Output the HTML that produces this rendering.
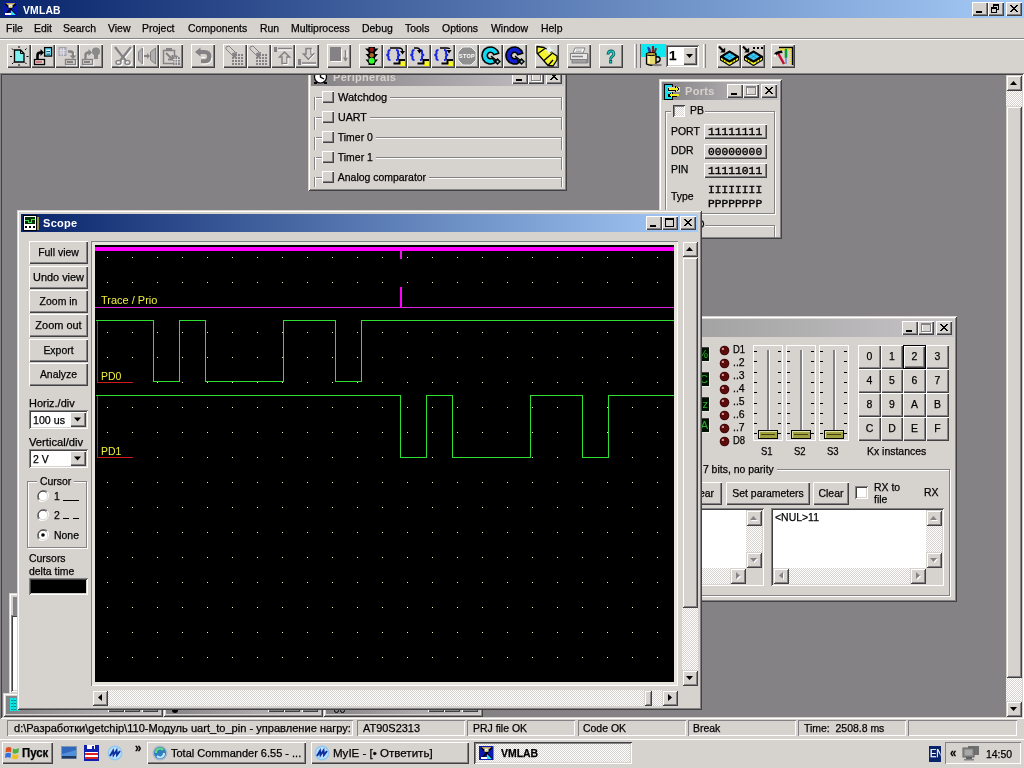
<!DOCTYPE html>
<html><head><meta charset="utf-8"><title>VMLAB</title><style>
*{box-sizing:border-box;margin:0;padding:0}
html,body{width:1024px;height:768px;overflow:hidden;background:#d6d3ce}
body{font-family:"Liberation Sans",sans-serif;font-size:11px;color:#000;position:relative}
#root{position:absolute;left:0;top:0;width:1024px;height:768px;will-change:transform}
.a{position:absolute}
.t{position:absolute;white-space:nowrap;-webkit-text-stroke:0.250px;line-height:13px;height:13px;transform-origin:0 0;transform:scaleX(.95)}
.tc{transform-origin:50% 0}
.win{position:absolute;background:#d6d3ce;box-shadow:inset 1px 1px 0 #d6d3ce,inset -1px -1px 0 #424142,inset 2px 2px 0 #fff,inset -2px -2px 0 #848284}
.btn{position:absolute;background:#d6d3ce;box-shadow:inset 1px 1px 0 #fff,inset -1px -1px 0 #424142,inset -2px -2px 0 #848284;text-align:center}
.tb{position:absolute;background:#d6d3ce;box-shadow:inset 1px 1px 0 #fff,inset -1px -1px 0 #424142,inset -2px -2px 0 #848284}
.sb{position:absolute;background:#d6d3ce;box-shadow:inset 1px 1px 0 #d6d3ce,inset -1px -1px 0 #424142,inset 2px 2px 0 #fff,inset -2px -2px 0 #848284}
.sunk{position:absolute;box-shadow:inset 1px 1px 0 #848284,inset -1px -1px 0 #fff,inset 2px 2px 0 #424142,inset -2px -2px 0 #d6d3ce}
.thin{position:absolute;box-shadow:inset 1px 1px 0 #848284,inset -1px -1px 0 #fff}
.trk{position:absolute;background:repeating-conic-gradient(#fff 0% 25%,#d6d3ce 0% 50%) 0 0/2px 2px}
.grp{position:absolute;border:1px solid #848284;box-shadow:1px 1px 0 #fff,inset 1px 1px 0 #fff}
.tact{position:absolute;background:linear-gradient(90deg,#08246b,#a5cbf7)}
.tina{position:absolute;background:linear-gradient(90deg,#848284,#c6c3c6)}
.cap{position:absolute;color:#fff;font-weight:bold;font-size:11px;line-height:13px;white-space:nowrap}
svg{position:absolute;overflow:visible}
</style></head><body><div id="root">
<div class="tact" style="left:0px;top:0px;width:1024px;height:18px;"></div>
<svg class="a" style="left:2px;top:1px" width="16" height="16"><rect x="1" y="1" width="14.500" height="14" fill="#0818b0"/>
<path d="M2.500 2.200 H14.500 L13 3.800 H4 Z" fill="#f0d040"/>
<path d="M3 2.500 L14 14 M14 2.500 L3 14" stroke="#000" stroke-width="1.700"/>
<rect x="6.500" y="3.500" width="4" height="3.200" fill="#f4f4e0"/><path d="M7 7 L9.500 5" stroke="#e0c030" stroke-width="1"/>
<path d="M9 9 L14 14 H9 Z" fill="#30e0f0"/><rect x="3" y="12" width="6" height="2" fill="#fff"/></svg>
<div class="cap" style="left:23px;top:4px;letter-spacing:0.2px;transform-origin:0 0;transform:scaleX(.94)">VMLAB</div>
<div class="tb" style="left:972px;top:2px;width:16px;height:14px;"></div>
<svg class="a" style="left:972px;top:2px" width="16" height="14" shape-rendering="crispEdges"><rect x="4" y="9" width="6" height="2" fill="#000"/></svg>
<div class="tb" style="left:988px;top:2px;width:16px;height:14px;"></div>
<svg class="a" style="left:988px;top:2px" width="16" height="14" shape-rendering="crispEdges"><rect x="5.5" y="2.5" width="5" height="5" fill="none" stroke="#000"/><rect x="5" y="2" width="6" height="2" fill="#000"/><rect x="3.5" y="5.5" width="5" height="5" fill="#d6d3ce" stroke="#000"/><rect x="3" y="5" width="6" height="2" fill="#000"/></svg>
<div class="tb" style="left:1006px;top:2px;width:16px;height:14px;"></div>
<svg class="a" style="left:1006px;top:2px" width="16" height="14" shape-rendering="crispEdges"><path d="M4 3 L11 10 M5 3 L12 10 M11 3 L4 10 M12 3 L5 10" stroke="#000" stroke-width="1" shape-rendering="auto"/></svg>
<div class="t" style="left:6px;top:22px;">File</div>
<div class="t" style="left:34px;top:22px;">Edit</div>
<div class="t" style="left:63px;top:22px;">Search</div>
<div class="t" style="left:108px;top:22px;">View</div>
<div class="t" style="left:142px;top:22px;">Project</div>
<div class="t" style="left:188px;top:22px;">Components</div>
<div class="t" style="left:260px;top:22px;">Run</div>
<div class="t" style="left:291px;top:22px;">Multiprocess</div>
<div class="t" style="left:362px;top:22px;">Debug</div>
<div class="t" style="left:405px;top:22px;">Tools</div>
<div class="t" style="left:442px;top:22px;">Options</div>
<div class="t" style="left:491px;top:22px;">Window</div>
<div class="t" style="left:541px;top:22px;">Help</div>
<div class="a" style="left:0px;top:38px;width:1024px;height:1px;background:#848284"></div>
<div class="a" style="left:0px;top:39px;width:1024px;height:1px;background:#fff"></div>
<div class="tb" style="left:7px;top:44px;width:24px;height:24px;"></div>
<div class="tb" style="left:31px;top:44px;width:24px;height:24px;"></div>
<div class="tb" style="left:55px;top:44px;width:24px;height:24px;"></div>
<div class="tb" style="left:79px;top:44px;width:24px;height:24px;"></div>
<div class="tb" style="left:111px;top:44px;width:24px;height:24px;"></div>
<div class="tb" style="left:135px;top:44px;width:24px;height:24px;"></div>
<div class="tb" style="left:159px;top:44px;width:24px;height:24px;"></div>
<div class="tb" style="left:191px;top:44px;width:24px;height:24px;"></div>
<div class="tb" style="left:223px;top:44px;width:24px;height:24px;"></div>
<div class="tb" style="left:247px;top:44px;width:24px;height:24px;"></div>
<div class="tb" style="left:271px;top:44px;width:24px;height:24px;"></div>
<div class="tb" style="left:295px;top:44px;width:24px;height:24px;"></div>
<div class="tb" style="left:327px;top:44px;width:24px;height:24px;"></div>
<div class="tb" style="left:359px;top:44px;width:24px;height:24px;"></div>
<div class="tb" style="left:383px;top:44px;width:24px;height:24px;"></div>
<div class="tb" style="left:407px;top:44px;width:24px;height:24px;"></div>
<div class="tb" style="left:431px;top:44px;width:24px;height:24px;"></div>
<div class="tb" style="left:455px;top:44px;width:24px;height:24px;"></div>
<div class="tb" style="left:479px;top:44px;width:24px;height:24px;"></div>
<div class="tb" style="left:503px;top:44px;width:24px;height:24px;"></div>
<div class="tb" style="left:535px;top:44px;width:24px;height:24px;"></div>
<div class="tb" style="left:567px;top:44px;width:24px;height:24px;"></div>
<div class="tb" style="left:599px;top:44px;width:24px;height:24px;"></div>
<div class="a" style="left:634px;top:44px;width:1px;height:24px;background:#fff"></div>
<div class="a" style="left:636px;top:44px;width:1px;height:24px;background:#848284"></div>
<div class="a" style="left:703px;top:44px;width:1px;height:24px;background:#fff"></div>
<div class="a" style="left:705px;top:44px;width:1px;height:24px;background:#848284"></div>
<div class="a" style="left:640px;top:44px;width:26px;height:24px;background:linear-gradient(#10e8f0 0 13px,#d6d3ce 13px);box-shadow:inset 1px 0 0 #606060"></div>
<div class="a" style="left:666px;top:45px;width:33px;height:22px;background:#fff;box-shadow:inset 1px 1px 0 #848284,inset -1px -1px 0 #fff,inset 2px 2px 0 #424142,inset -2px -2px 0 #d6d3ce"></div>
<div class="t" style="left:669px;top:48px;font-size:13.500px;font-weight:bold;line-height:15px;height:15px;transform:none">1</div>
<div class="a" style="left:683px;top:47px;width:14px;height:18px;background:#d6d3ce;box-shadow:inset 1px 1px 0 #fff,inset -1px -1px 0 #424142,inset -2px -2px 0 #848284"></div>
<svg class="a" style="left:683px;top:47px" width="14" height="18"><polygon points="3.0,7 10.0,7 6.5,11" fill="#000"/></svg>
<div class="tb" style="left:717px;top:44px;width:24px;height:24px;"></div>
<div class="tb" style="left:741px;top:44px;width:24px;height:24px;"></div>
<div class="tb" style="left:771px;top:44px;width:24px;height:24px;"></div>
<div class="a" style="left:0px;top:73px;width:1024px;height:646px;background:#848284;box-shadow:inset 1px 1px 0 #848284,inset -1px -1px 0 #fff,inset 2px 2px 0 #424142,inset -2px -2px 0 #d6d3ce"></div>
<svg class="a" style="left:7px;top:44px" width="24" height="24"><path d="M7.500 6 H13.500 L17 9.500 V18 H7.500 Z" fill="#7ff0f0" stroke="#000" stroke-width="1.300"/>
<path d="M13.500 6 V9.500 H17" fill="none" stroke="#000"/>
<g stroke="#000" stroke-width="1"><path d="M12 2v2 M12 20v2 M3 12.500h2 M19.500 12.500h2 M5 4.500l1.500 1.500 M19.500 4.500l-1.500 1.500 M5 20l1.500-1.500 M19.500 20l-1.500-1.500"/></g></svg>
<svg class="a" style="left:31px;top:44px" width="24" height="24"><rect x="3.500" y="15.500" width="10" height="5" fill="#e8d8d8" stroke="#000" stroke-width="1.300"/><rect x="5" y="17.200" width="6" height="1.600" fill="#d06060"/>
<path d="M6.500 15 V11.500 Q6.500 8.500 9.500 8.500 H10.500" fill="none" stroke="#000" stroke-width="2.600"/><path d="M9.500 5 L13 8.500 L9.500 12 Z" fill="#000"/>
<rect x="13.600" y="3.600" width="7" height="8.500" fill="#60e0ff" stroke="#000" stroke-width="1.300"/><path d="M15.500 6.500h3.500 M15.500 9h3.500" stroke="#fff" stroke-width="1.100"/><path d="M15.500 7.600h3.500 M15.500 10.100h3.500" stroke="#000" stroke-width="0.700"/></svg>
<svg class="a" style="left:55px;top:44px" width="24" height="24"><g transform="translate(1,1)"><rect x="10.500" y="15.5" width="10" height="5" fill="none" stroke="#fff" stroke-width="1.4"/></g>
<rect x="4" y="3.500" width="7" height="8" fill="#b8b8c8" stroke="#a0a0a8"/><path d="M6 4v8 M8.5 4v8 M4 6.500h7 M4 9h7" stroke="#e8e0e8" stroke-width="0.8"/>
<path d="M13 7.500 H15.500 Q18 7.500 18 10 V12" fill="none" stroke="#848284" stroke-width="2.300"/><path d="M14.500 11.500 H21.500 L18 15 Z" fill="#848284"/><path d="M19.500 9 V11" stroke="#fff" stroke-width="0.800"/>
<rect x="10.500" y="15.5" width="10" height="5" fill="#d6d3ce" stroke="#848284" stroke-width="1.4"/><rect x="12" y="17" width="6" height="2" fill="#848284"/></svg>
<svg class="a" style="left:79px;top:44px" width="24" height="24"><g transform="translate(1,1)"><rect x="3.500" y="15.5" width="10" height="5" fill="none" stroke="#fff" stroke-width="1.4"/></g>
<rect x="3.500" y="15.5" width="10" height="5" fill="#d6d3ce" stroke="#848284" stroke-width="1.4"/><rect x="5" y="17" width="6" height="2" fill="#848284"/>
<path d="M6.500 15 V11.500 Q6.500 8.500 9.500 8.500 H10.500" fill="none" stroke="#848284" stroke-width="2.300"/><path d="M9.500 5 L13 8.500 L9.500 12 Z" fill="#848284"/>
<circle cx="17" cy="7.500" r="4" fill="#8a8a8a"/><rect x="15" y="10.500" width="4" height="4.500" fill="#8a8a8a"/></svg>
<svg class="a" style="left:111px;top:44px" width="24" height="24"><g transform="translate(1,1)" fill="#fff" stroke="#fff"><path d="M4 3 L15 17 M20 3 L9 17" fill="none" stroke-width="2.400"/><ellipse cx="7.500" cy="18.500" rx="2.500" ry="2" fill="none" stroke-width="1.5"/><ellipse cx="16.500" cy="18.500" rx="2.500" ry="2" fill="none" stroke-width="1.500"/></g><g fill="#848284" stroke="#848284"><path d="M4 3 L15 17 M20 3 L9 17" fill="none" stroke-width="2.400"/><ellipse cx="7.500" cy="18.500" rx="2.500" ry="2" fill="none" stroke-width="1.5"/><ellipse cx="16.500" cy="18.500" rx="2.500" ry="2" fill="none" stroke-width="1.500"/></g></svg>
<svg class="a" style="left:135px;top:44px" width="24" height="24"><path d="M3.500 8 L7.500 4 V20 L3.500 16 Z" fill="#b0b0b0" stroke="#848284"/><path d="M20.500 4 V20 L15.500 16 V8 Z" fill="#b0b0b0" stroke="#848284"/>
<path d="M9 12 H14" stroke="#848284" stroke-width="2"/><path d="M12 9 L15 12 L12 15 Z" fill="#848284"/><path d="M8.5 3v18" stroke="#fff"/></svg>
<svg class="a" style="left:159px;top:44px" width="24" height="24"><rect x="4.500" y="6.500" width="11" height="13" fill="none" stroke="#848284" stroke-width="1.500"/><rect x="7" y="4" width="6" height="3" fill="#848284"/>
<path d="M7 9 L13 15" stroke="#848284" stroke-width="2"/><path d="M9 15.500 H13.500 V11" fill="none" stroke="#848284" stroke-width="2"/>
<path d="M14 13 L17 11 L21 14 V21 H14 Z" fill="#848284"/><path d="M16 13v8 M18.500 13v8 M14 15.500h7 M14 18h7" stroke="#e0e0e0" stroke-width="0.900"/></svg>
<svg class="a" style="left:191px;top:44px" width="24" height="24"><path d="M9 8 H13.500 Q18.200 8 18.200 12.500 Q18.200 17.300 13.500 17.300 H10" fill="none" stroke="#848284" stroke-width="4.200"/><path d="M9.500 3.500 V12.500 L4 8 Z" fill="#848284"/><path d="M10 20 H14 Q20.800 20 20.800 14" fill="none" stroke="#fff" stroke-width="1"/><path d="M10.500 13.500 H14" stroke="#fff" stroke-width="1"/></svg>
<svg class="a" style="left:223px;top:44px" width="24" height="24"><path d="M3 3 L6 2 L13 9 L10 12 L3 5 Z" fill="#d6d3ce" stroke="#848284"/><path d="M9 9 L14 8 L13 13 L10 14 Z" fill="#848284"/>
<g fill="#848284"><rect x="9" y="13" width="2" height="2"/><rect x="12" y="13" width="2" height="2"/><rect x="15" y="13" width="2" height="2"/><rect x="18" y="13" width="2" height="2"/>
<rect x="9" y="16" width="2" height="2"/><rect x="12" y="16" width="2" height="2"/><rect x="15" y="16" width="2" height="2"/><rect x="18" y="16" width="2" height="2"/>
<rect x="9" y="19" width="2" height="2"/><rect x="12" y="19" width="2" height="2"/><rect x="15" y="19" width="2" height="2"/><rect x="18" y="19" width="2" height="2"/>
<rect x="12" y="10" width="2" height="2"/><rect x="15" y="10" width="2" height="2"/><rect x="18" y="10" width="2" height="2"/></g></svg>
<svg class="a" style="left:247px;top:44px" width="24" height="24"><path d="M3 3 L6 2 L13 9 L10 12 L3 5 Z" fill="#d6d3ce" stroke="#848284"/><path d="M9 9 L14 8 L13 13 L10 14 Z" fill="#848284"/>
<g fill="#848284"><rect x="9" y="13" width="2" height="2"/><rect x="12" y="13" width="2" height="2"/><rect x="15" y="13" width="2" height="2"/><rect x="18" y="13" width="2" height="2"/>
<rect x="9" y="16" width="2" height="2"/><rect x="12" y="16" width="2" height="2"/><rect x="15" y="16" width="2" height="2"/><rect x="18" y="16" width="2" height="2"/>
<rect x="9" y="19" width="2" height="2"/><rect x="12" y="19" width="2" height="2"/><rect x="15" y="19" width="2" height="2"/><rect x="18" y="19" width="2" height="2"/>
<rect x="12" y="10" width="2" height="2"/><rect x="15" y="10" width="2" height="2"/><rect x="18" y="10" width="2" height="2"/></g></svg>
<svg class="a" style="left:271px;top:44px" width="24" height="24"><rect x="3" y="3" width="3" height="5" fill="#848284"/><path d="M7 4.500 H21" stroke="#848284" stroke-width="1.500"/><path d="M7 6 H21" stroke="#fff"/>
<path d="M13.500 8 L18.500 13 H16 V19.500 H11 V13 H8.500 Z" fill="#d6d3ce" stroke="#848284" stroke-width="1.500"/><path d="M17 14 V20.500 H12" fill="none" stroke="#fff"/></svg>
<svg class="a" style="left:295px;top:44px" width="24" height="24"><rect x="3" y="15" width="3" height="6" fill="#848284"/><path d="M7 19 H21" stroke="#848284" stroke-width="1.500"/><path d="M7 20.500 H21" stroke="#fff"/>
<path d="M11 4.500 H16 V10 H18.500 L13.500 15.500 L8.500 10 H11 Z" fill="#d6d3ce" stroke="#848284" stroke-width="1.500"/><path d="M17 5 V10 M19.500 10.500 L14 16.500" fill="none" stroke="#fff"/></svg>
<svg class="a" style="left:327px;top:44px" width="24" height="24"><rect x="4" y="5" width="11" height="13" fill="#fff"/><rect x="3" y="3" width="11" height="14" fill="#848284"/><path d="M18.500 6 V17" stroke="#848284" stroke-width="1.500"/><path d="M16 13.500 H21 L18.500 17.500 Z" fill="#848284"/><path d="M20 6v8" stroke="#fff"/></svg>
<svg class="a" style="left:359px;top:44px" width="24" height="24"><rect x="9.500" y="3" width="6.500" height="18" fill="#000"/><path d="M6 4.500 H19.500 L16 8 H9.500 Z M6.500 10 H19 L16 13.500 H9.500 Z M6.500 15.500 H19 L16 19 H9.500 Z" fill="#000"/>
<circle cx="12.700" cy="5.800" r="2.200" fill="#901818"/><circle cx="12.700" cy="11.300" r="2.200" fill="#b06828"/><circle cx="12.700" cy="16.800" r="3" fill="#30ff30"/></svg>
<svg class="a" style="left:383px;top:44px" width="24" height="24"><path d="M7.500 6 Q5 6 5.500 8.500 Q6 10.500 3.500 11 Q6 11.500 5.500 13.500 Q5 16 7.500 16" fill="none" stroke="#1828e0" stroke-width="2.100"/>
<path d="M13 6 Q15.500 6 15 8.500 Q14.500 10.500 17 11 Q14.500 11.500 15 13.500 Q15.500 16 13 16" fill="none" stroke="#1828e0" stroke-width="2.100"/>
<rect x="16.500" y="17.500" width="5.500" height="4.500" fill="#f8f820"/><path d="M10.500 19.500 H16.500 V16 H22" fill="none" stroke="#000" stroke-width="2"/><path d="M7 4 H16 Q19.500 4 19.500 7" fill="none" stroke="#000" stroke-width="1.300"/><path d="M17 7 H22 L19.500 10.500 Z" fill="#000"/></svg>
<svg class="a" style="left:407px;top:44px" width="24" height="24"><path d="M7.500 6 Q5 6 5.500 8.500 Q6 10.500 3.500 11 Q6 11.500 5.500 13.500 Q5 16 7.500 16" fill="none" stroke="#1828e0" stroke-width="2.100"/>
<path d="M13 6 Q15.500 6 15 8.500 Q14.500 10.500 17 11 Q14.500 11.500 15 13.500 Q15.500 16 13 16" fill="none" stroke="#1828e0" stroke-width="2.100"/>
<rect x="16.500" y="17.500" width="5.500" height="4.500" fill="#f8f820"/><path d="M10.500 19.500 H16.500 V16 H22" fill="none" stroke="#000" stroke-width="2"/><path d="M7 4 H10 Q12.500 4 12.500 6" fill="none" stroke="#000" stroke-width="1.300"/><path d="M10 6 H15 L12.500 9.500 Z" fill="#000"/></svg>
<svg class="a" style="left:431px;top:44px" width="24" height="24"><path d="M7.500 6 Q5 6 5.500 8.500 Q6 10.500 3.500 11 Q6 11.500 5.500 13.500 Q5 16 7.500 16" fill="none" stroke="#1828e0" stroke-width="2.100"/>
<path d="M13 6 Q15.500 6 15 8.500 Q14.500 10.500 17 11 Q14.500 11.500 15 13.500 Q15.500 16 13 16" fill="none" stroke="#1828e0" stroke-width="2.100"/>
<rect x="16.500" y="17.500" width="5.500" height="4.500" fill="#f8f820"/><path d="M10.500 19.500 H16.500 V16 H22" fill="none" stroke="#000" stroke-width="2"/><path d="M9 4 H16 Q18.500 4 18.500 5" fill="none" stroke="#000" stroke-width="1.300"/><path d="M15.500 6 H20.500 L18 9.500 Z" fill="#000"/></svg>
<svg class="a" style="left:455px;top:44px" width="24" height="24"><path d="M8 3 H16 L21 8 V16 L16 21 H8 L3 16 V8 Z" fill="#909090" stroke="#fff" stroke-width="0.800"/><text x="12" y="14" font-family="Liberation Sans" font-size="5.500" font-weight="bold" fill="#fff" text-anchor="middle" letter-spacing="0.300">STOP</text></svg>
<svg class="a" style="left:479px;top:44px" width="24" height="24"><path d="M16.380 18.460 A8.500 8.500 0 1 1 19.710 9.300 L14.590 10.670 A3.200 3.200 0 1 0 13.340 14.120 Z" fill="#10d8f0" stroke="#000" stroke-width="1.600" stroke-linejoin="round"/>
<path d="M12 12 L18 17" stroke="#000" stroke-width="1.300"/><path d="M18.500 14 L22 17.500 L18.500 21 L15 17.500 Z" fill="#000"/><rect x="17.700" y="16.700" width="1.800" height="1.800" fill="#90e8e8"/></svg>
<svg class="a" style="left:503px;top:44px" width="24" height="24"><path d="M16.380 18.460 A8.500 8.500 0 1 1 19.710 9.300 L14.590 10.670 A3.200 3.200 0 1 0 13.340 14.120 Z" fill="#1020d0" stroke="#000" stroke-width="1.600" stroke-linejoin="round"/>
<path d="M12 12 L18 17" stroke="#000" stroke-width="1.300"/><path d="M18.500 14 L22 17.500 L18.500 21 L15 17.500 Z" fill="#000"/><rect x="17.700" y="16.700" width="1.800" height="1.800" fill="#90e8e8"/></svg>
<svg class="a" style="left:535px;top:44px" width="24" height="24"><path d="M2 2.500 L9 3.500 L22 12 L22 16 L18 22 L13 21.500 L2 9 Z" fill="#f4f430" stroke="#000" stroke-width="1.300" stroke-linejoin="round"/><path d="M3 9.500 L10 4.500 M9 16.500 L17 9.500 M13 21.500 L18 16" stroke="#000" stroke-width="1.300"/>
<path d="M14 1 L15 5 L19 6 L15 7 L14 11 L13 7 L9 6 L13 5 Z" fill="#fff"/><path d="M11.500 3.500 L16.500 8.500 M16.500 3.500 L11.500 8.500" stroke="#d0f4ff" stroke-width="1"/></svg>
<svg class="a" style="left:567px;top:44px" width="24" height="24"><path d="M8 4 H18 L16 9 H6 Z" fill="#fff" stroke="#848284"/><path d="M9 6h6 M8.500 7.500h6" stroke="#a0a0a0" stroke-width="0.800"/>
<rect x="3.500" y="9.500" width="17" height="6" fill="#e8e8e8" stroke="#848284"/><rect x="5" y="15.500" width="15" height="3.500" fill="#a0a0a0" stroke="#848284"/><path d="M5 12.500 H16" stroke="#848284" stroke-width="1.500"/><rect x="20" y="10" width="1.500" height="9" fill="#848284"/></svg>
<svg class="a" style="left:599px;top:44px" width="24" height="24"><text x="12" y="18.600" font-family="Liberation Sans" font-size="18" font-weight="bold" fill="#20d8d8" stroke="#005858" stroke-width="0.900" text-anchor="middle" textLength="9.500" lengthAdjust="spacingAndGlyphs">?</text></svg>
<svg class="a" style="left:717px;top:44px" width="24" height="24"><path d="M3.500 12.500 V16 L12.500 21.500 L21.500 16 V12.500 L12.500 18 Z" fill="#f8f820" stroke="#000" stroke-width="1.100" stroke-linejoin="round"/>
<path d="M12.500 7 L21.500 12.500 L12.500 18 L3.500 12.500 Z" fill="#000" stroke="#000" stroke-width="1.100" stroke-linejoin="round"/>
<path d="M12.500 8.800 L18.500 12.500 L12.500 16.200 L6.500 12.500 Z" fill="#38c8f4"/>
<path d="M9.500 10.700 L15.500 14.400 M15.500 10.700 L9.500 14.400" stroke="#1890c0" stroke-width="0.700"/>
<path d="M6.500 15 v2.500 M9 16.500 v2.500 M15.800 16.500 v2.500 M18.500 15 v2.500" stroke="#000" stroke-width="0.700"/>
<path d="M2 2.500 L6.500 7" stroke="#000" stroke-width="2.200"/><path d="M8.200 3.500 V8.500 H3.200 Z" fill="#000"/></svg>
<svg class="a" style="left:741px;top:44px" width="24" height="24"><path d="M3.500 12.500 V16 L12.500 21.500 L21.500 16 V12.500 L12.500 18 Z" fill="#f8f820" stroke="#000" stroke-width="1.100" stroke-linejoin="round"/>
<path d="M12.500 7 L21.500 12.500 L12.500 18 L3.500 12.500 Z" fill="#000" stroke="#000" stroke-width="1.100" stroke-linejoin="round"/>
<path d="M12.500 8.800 L18.500 12.500 L12.500 16.200 L6.500 12.500 Z" fill="#38c8f4"/>
<path d="M9.500 10.700 L15.500 14.400 M15.500 10.700 L9.500 14.400" stroke="#1890c0" stroke-width="0.700"/>
<path d="M6.500 15 v2.500 M9 16.500 v2.500 M15.800 16.500 v2.500 M18.500 15 v2.500" stroke="#000" stroke-width="0.700"/>
<path d="M2 2.500 L6.500 7" stroke="#000" stroke-width="2.200"/><path d="M8.200 3.500 V8.500 H3.200 Z" fill="#000"/><rect x="12" y="3" width="2" height="2"/><rect x="16" y="3" width="2" height="2"/><rect x="20" y="3" width="2" height="2"/></svg>
<svg class="a" style="left:771px;top:44px" width="24" height="24"><path d="M8 3.500 H21.500 V21" fill="none" stroke="#000" stroke-width="1.500"/><path d="M9 5.500 H19.500 V21" fill="none" stroke="#e8d820" stroke-width="2" stroke-dasharray="1 1"/>
<path d="M7 9 L13 20" stroke="#c01030" stroke-width="2.500"/><path d="M3 11 Q3 7 11 6.500 L11.500 9 Q6 9 5 12 Z" fill="#000"/><circle cx="4" cy="11.500" r="1.300" fill="#fff"/>
<path d="M15 6 V13" stroke="#10a030" stroke-width="2.600" stroke-linecap="round"/><path d="M15 13 V20" stroke="#5080c0" stroke-width="1.200"/></svg>
<svg class="a" style="left:640px;top:44px" width="26" height="24">
<path d="M9 4 L11 11 M13 2 L13 11 M16 4 L14 11" stroke="#802020" stroke-width="2"/><path d="M8 3 L10 9" stroke="#2040c0" stroke-width="2"/>
<path d="M15 13 Q21 12 20 16 Q19 19 15 18" fill="none" stroke="#000" stroke-width="1.500"/>
<path d="M6.500 10 H16 V20 Q11 22.500 6.500 20 Z" fill="#e8d870" stroke="#000" stroke-width="1.300"/><ellipse cx="11.200" cy="10" rx="4.800" ry="1.600" fill="#c0a840" stroke="#000" stroke-width="1"/>
<path d="M9 12 V19" stroke="#fff8c0" stroke-width="1.500"/><ellipse cx="17" cy="21" rx="5" ry="1.200" fill="#848284"/></svg>
<div class="a" style="left:2px;top:75px;width:1004px;height:641px;overflow:hidden"><div class="a" style="left:-2px;top:-75px;width:1024px;height:768px">
<div class="win" style="left:308px;top:64px;width:259px;height:127px;"></div>
<div class="tina" style="left:311px;top:68px;width:253px;height:18px;"></div>
<svg class="a" style="left:314px;top:69px" width="14" height="16"><circle cx="6.500" cy="8" r="6" fill="#fff" stroke="#000" stroke-width="1.200"/><path d="M6.500 4 V8 L10 10" fill="none" stroke="#000" stroke-width="1.400"/><rect x="0" y="13" width="3" height="2" fill="#000"/><rect x="10" y="13" width="3" height="2" fill="#000"/><circle cx="2" cy="3" r="1.500" fill="#000"/><circle cx="11" cy="3" r="1.500" fill="#000"/></svg>
<div class="cap" style="left:333px;top:71px;color:#d6d3ce;letter-spacing:0.3px">Peripherals</div>
<div class="tb" style="left:512px;top:70px;width:16px;height:14px;"></div>
<svg class="a" style="left:512px;top:70px" width="16" height="14" shape-rendering="crispEdges"><rect x="4" y="9" width="6" height="2" fill="#000"/></svg>
<div class="tb" style="left:528px;top:70px;width:16px;height:14px;"></div>
<svg class="a" style="left:528px;top:70px" width="16" height="14" shape-rendering="crispEdges"><rect x="4.5" y="3.5" width="9" height="8" fill="none" stroke="#fff"/><rect x="3.5" y="2.5" width="9" height="8" fill="none" stroke="#848284"/><rect x="3" y="2" width="10" height="2" fill="#848284"/></svg>
<div class="tb" style="left:546px;top:70px;width:16px;height:14px;"></div>
<svg class="a" style="left:546px;top:70px" width="16" height="14" shape-rendering="crispEdges"><path d="M4 3 L11 10 M5 3 L12 10 M11 3 L4 10 M12 3 L5 10" stroke="#000" stroke-width="1" shape-rendering="auto"/></svg>
<div class="a" style="left:314px;top:97px;width:248px;height:1px;background:#848284"></div>
<div class="a" style="left:314px;top:98px;width:248px;height:1px;background:#fff"></div>
<div class="a" style="left:314px;top:97px;width:1px;height:13px;background:#848284"></div>
<div class="a" style="left:315px;top:97px;width:1px;height:13px;background:#fff"></div>
<div class="a" style="left:561px;top:98px;width:1px;height:12px;background:#848284"></div>
<div class="a" style="left:562px;top:97px;width:1px;height:13px;background:#fff"></div>
<div class="tb" style="left:322px;top:91px;width:12px;height:12px;"></div>
<div class="t" style="left:334px;top:91px;background:#d6d3ce;padding:0 3px 0 4px;transform:scaleX(1.0)">Watchdog</div>
<div class="a" style="left:314px;top:117px;width:248px;height:1px;background:#848284"></div>
<div class="a" style="left:314px;top:118px;width:248px;height:1px;background:#fff"></div>
<div class="a" style="left:314px;top:117px;width:1px;height:13px;background:#848284"></div>
<div class="a" style="left:315px;top:117px;width:1px;height:13px;background:#fff"></div>
<div class="a" style="left:561px;top:118px;width:1px;height:12px;background:#848284"></div>
<div class="a" style="left:562px;top:117px;width:1px;height:13px;background:#fff"></div>
<div class="tb" style="left:322px;top:111px;width:12px;height:12px;"></div>
<div class="t" style="left:334px;top:111px;background:#d6d3ce;padding:0 3px 0 4px;transform:scaleX(0.975)">UART</div>
<div class="a" style="left:314px;top:137px;width:248px;height:1px;background:#848284"></div>
<div class="a" style="left:314px;top:138px;width:248px;height:1px;background:#fff"></div>
<div class="a" style="left:314px;top:137px;width:1px;height:13px;background:#848284"></div>
<div class="a" style="left:315px;top:137px;width:1px;height:13px;background:#fff"></div>
<div class="a" style="left:561px;top:138px;width:1px;height:12px;background:#848284"></div>
<div class="a" style="left:562px;top:137px;width:1px;height:13px;background:#fff"></div>
<div class="tb" style="left:322px;top:131px;width:12px;height:12px;"></div>
<div class="t" style="left:334px;top:131px;background:#d6d3ce;padding:0 3px 0 4px">Timer 0</div>
<div class="a" style="left:314px;top:157px;width:248px;height:1px;background:#848284"></div>
<div class="a" style="left:314px;top:158px;width:248px;height:1px;background:#fff"></div>
<div class="a" style="left:314px;top:157px;width:1px;height:13px;background:#848284"></div>
<div class="a" style="left:315px;top:157px;width:1px;height:13px;background:#fff"></div>
<div class="a" style="left:561px;top:158px;width:1px;height:12px;background:#848284"></div>
<div class="a" style="left:562px;top:157px;width:1px;height:13px;background:#fff"></div>
<div class="tb" style="left:322px;top:151px;width:12px;height:12px;"></div>
<div class="t" style="left:334px;top:151px;background:#d6d3ce;padding:0 3px 0 4px">Timer 1</div>
<div class="a" style="left:314px;top:177px;width:248px;height:1px;background:#848284"></div>
<div class="a" style="left:314px;top:178px;width:248px;height:1px;background:#fff"></div>
<div class="a" style="left:314px;top:177px;width:1px;height:10px;background:#848284"></div>
<div class="a" style="left:315px;top:177px;width:1px;height:10px;background:#fff"></div>
<div class="a" style="left:561px;top:178px;width:1px;height:9px;background:#848284"></div>
<div class="a" style="left:562px;top:177px;width:1px;height:10px;background:#fff"></div>
<div class="tb" style="left:322px;top:171px;width:12px;height:12px;"></div>
<div class="t" style="left:334px;top:171px;background:#d6d3ce;padding:0 3px 0 4px">Analog comparator</div>
</div></div>
<div class="a" style="left:659px;top:79px;width:123px;height:160px;overflow:hidden"><div class="a" style="left:-659px;top:-79px;width:1024px;height:768px">
<div class="win" style="left:659px;top:79px;width:123px;height:160px;"></div>
<div class="tina" style="left:662px;top:82px;width:117px;height:18px;"></div>
<svg class="a" style="left:664px;top:83px" width="18" height="17" shape-rendering="crispEdges"><rect x="0.500" y="1.500" width="8" height="15" fill="#10e0f0" stroke="#000"/><rect x="4" y="4" width="12" height="5" fill="#d6d3ce" stroke="none"/>
<path d="M4 6 H13 M4 12 H13" stroke="#000" stroke-width="3"/><path d="M11 2.500 L16 6 L11 9.500 Z M9 8.500 L4 12 L9 15.500 Z" fill="#000"/>
<path d="M5 6 H13 M7 12 H15" stroke="#f0f020" stroke-width="1.200"/><path d="M12 4 L15 6 L12 8 Z M8 10 L5 12 L8 14 Z" fill="#f0f020"/></svg>
<div class="cap" style="left:685px;top:85px;color:#d6d3ce;letter-spacing:0.3px">Ports</div>
<div class="tb" style="left:727px;top:84px;width:16px;height:14px;"></div>
<svg class="a" style="left:727px;top:84px" width="16" height="14" shape-rendering="crispEdges"><rect x="4" y="9" width="6" height="2" fill="#000"/></svg>
<div class="tb" style="left:743px;top:84px;width:16px;height:14px;"></div>
<svg class="a" style="left:743px;top:84px" width="16" height="14" shape-rendering="crispEdges"><rect x="4.5" y="3.5" width="9" height="8" fill="none" stroke="#fff"/><rect x="3.5" y="2.5" width="9" height="8" fill="none" stroke="#848284"/><rect x="3" y="2" width="10" height="2" fill="#848284"/></svg>
<div class="tb" style="left:761px;top:84px;width:16px;height:14px;"></div>
<svg class="a" style="left:761px;top:84px" width="16" height="14" shape-rendering="crispEdges"><path d="M4 3 L11 10 M5 3 L12 10 M11 3 L4 10 M12 3 L5 10" stroke="#000" stroke-width="1" shape-rendering="auto"/></svg>
<div class="grp" style="left:665px;top:111px;width:110px;height:103px;"></div>
<div class="a" style="left:671px;top:104px;width:34px;height:14px;background:#d6d3ce"></div>
<div class="a" style="left:673px;top:105px;width:12px;height:12px;background:repeating-conic-gradient(#fff 0% 25%,#d6d3ce 0% 50%) 0 0/2px 2px;box-shadow:inset 1px 1px 0 #424142,inset -1px -1px 0 #fff,inset 2px 2px 0 #848284"></div>
<div class="t" style="left:690px;top:104px;">PB</div>
<div class="t" style="left:671px;top:125px;">PORT</div>
<div class="tb" style="left:704px;top:124px;width:63px;height:15px;"></div>
<div class="t" style="left:708px;top:126px;font-family:'Liberation Mono',monospace;font-size:11.700px;-webkit-text-stroke:0.400px;transform:scaleX(0.965)">11111111</div>
<div class="t" style="left:671px;top:144px;">DDR</div>
<div class="tb" style="left:704px;top:144px;width:63px;height:15px;"></div>
<div class="t" style="left:708px;top:146px;font-family:'Liberation Mono',monospace;font-size:11.700px;-webkit-text-stroke:0.400px;transform:scaleX(0.965)">00000000</div>
<div class="t" style="left:671px;top:163px;">PIN</div>
<div class="tb" style="left:704px;top:163px;width:63px;height:15px;"></div>
<div class="t" style="left:708px;top:165px;font-family:'Liberation Mono',monospace;font-size:11.700px;-webkit-text-stroke:0.400px;transform:scaleX(0.965)">11111011</div>
<div class="t" style="left:671px;top:190px;">Type</div>
<div class="t" style="left:708px;top:184px;font-family:'Liberation Mono',monospace;font-size:11.700px;-webkit-text-stroke:0.400px;transform:scaleX(0.965)">IIIIIIII</div>
<div class="t" style="left:708px;top:198px;font-family:'Liberation Mono',monospace;font-size:11.700px;-webkit-text-stroke:0.400px;transform:scaleX(0.965)">PPPPPPPP</div>
<div class="grp" style="left:665px;top:225px;width:110px;height:30px;"></div>
<div class="a" style="left:671px;top:218px;width:34px;height:14px;background:#d6d3ce"></div>
<div class="t" style="left:690px;top:218px;">PD</div>
<div class="a" style="left:659px;top:237px;width:123px;height:2px;background:#d6d3ce;box-shadow:inset 1px 0 0 #d6d3ce,inset -1px -1px 0 #424142,inset 2px 0 0 #fff,inset -2px -2px 0 #848284"></div>
</div></div>
<div class="win" style="left:420px;top:316px;width:537px;height:286px;"></div>
<div class="tina" style="left:423px;top:319px;width:531px;height:18px;background:linear-gradient(90deg,#848284 0,#a8a8a8 60%,#c6c3c6)"></div>
<div class="tb" style="left:902px;top:321px;width:16px;height:14px;"></div>
<svg class="a" style="left:902px;top:321px" width="16" height="14" shape-rendering="crispEdges"><rect x="4" y="9" width="6" height="2" fill="#000"/></svg>
<div class="tb" style="left:918px;top:321px;width:16px;height:14px;"></div>
<svg class="a" style="left:918px;top:321px" width="16" height="14" shape-rendering="crispEdges"><rect x="4.5" y="3.5" width="9" height="8" fill="none" stroke="#fff"/><rect x="3.5" y="2.5" width="9" height="8" fill="none" stroke="#848284"/><rect x="3" y="2" width="10" height="2" fill="#848284"/></svg>
<div class="tb" style="left:936px;top:321px;width:16px;height:14px;"></div>
<svg class="a" style="left:936px;top:321px" width="16" height="14" shape-rendering="crispEdges"><path d="M4 3 L11 10 M5 3 L12 10 M11 3 L4 10 M12 3 L5 10" stroke="#000" stroke-width="1" shape-rendering="auto"/></svg>
<div class="a" style="left:680px;top:347px;width:30px;height:15px;background:#001000;box-shadow:inset -1px -1px 0 #e8e8e8,inset 1px 1px 0 #424142"></div>
<div class="t" style="left:680px;top:348px;color:#30b030;font-size:11px;width:28px;text-align:right;transform:none;-webkit-text-stroke:0">%</div>
<div class="a" style="left:680px;top:372px;width:30px;height:15px;background:#001000;box-shadow:inset -1px -1px 0 #e8e8e8,inset 1px 1px 0 #424142"></div>
<div class="t" style="left:680px;top:373px;color:#30b030;font-size:11px;width:28px;text-align:right;transform:none;-webkit-text-stroke:0">C</div>
<div class="a" style="left:680px;top:397px;width:30px;height:15px;background:#001000;box-shadow:inset -1px -1px 0 #e8e8e8,inset 1px 1px 0 #424142"></div>
<div class="t" style="left:680px;top:398px;color:#30b030;font-size:11px;width:28px;text-align:right;transform:none;-webkit-text-stroke:0">z</div>
<div class="a" style="left:680px;top:418px;width:30px;height:15px;background:#001000;box-shadow:inset -1px -1px 0 #e8e8e8,inset 1px 1px 0 #424142"></div>
<div class="t" style="left:680px;top:419px;color:#30b030;font-size:11px;width:28px;text-align:right;transform:none;-webkit-text-stroke:0">A</div>
<svg class="a" style="left:719px;top:345px" width="11" height="11"><circle cx="5.500" cy="5.500" r="4.800" fill="#400808"/><circle cx="5.500" cy="5.500" r="3.800" fill="#5c0c0c"/><circle cx="3.900" cy="3.900" r="1.200" fill="#d09090"/></svg>
<div class="t" style="left:733px;top:343px;;transform:scaleX(0.86)">D1</div>
<svg class="a" style="left:719px;top:358px" width="11" height="11"><circle cx="5.500" cy="5.500" r="4.800" fill="#400808"/><circle cx="5.500" cy="5.500" r="3.800" fill="#5c0c0c"/><circle cx="3.900" cy="3.900" r="1.200" fill="#d09090"/></svg>
<div class="t" style="left:733px;top:356px;">..2</div>
<svg class="a" style="left:719px;top:371px" width="11" height="11"><circle cx="5.500" cy="5.500" r="4.800" fill="#400808"/><circle cx="5.500" cy="5.500" r="3.800" fill="#5c0c0c"/><circle cx="3.900" cy="3.900" r="1.200" fill="#d09090"/></svg>
<div class="t" style="left:733px;top:369px;">..3</div>
<svg class="a" style="left:719px;top:384px" width="11" height="11"><circle cx="5.500" cy="5.500" r="4.800" fill="#400808"/><circle cx="5.500" cy="5.500" r="3.800" fill="#5c0c0c"/><circle cx="3.900" cy="3.900" r="1.200" fill="#d09090"/></svg>
<div class="t" style="left:733px;top:382px;">..4</div>
<svg class="a" style="left:719px;top:397px" width="11" height="11"><circle cx="5.500" cy="5.500" r="4.800" fill="#400808"/><circle cx="5.500" cy="5.500" r="3.800" fill="#5c0c0c"/><circle cx="3.900" cy="3.900" r="1.200" fill="#d09090"/></svg>
<div class="t" style="left:733px;top:395px;">..5</div>
<svg class="a" style="left:719px;top:410px" width="11" height="11"><circle cx="5.500" cy="5.500" r="4.800" fill="#400808"/><circle cx="5.500" cy="5.500" r="3.800" fill="#5c0c0c"/><circle cx="3.900" cy="3.900" r="1.200" fill="#d09090"/></svg>
<div class="t" style="left:733px;top:408px;">..6</div>
<svg class="a" style="left:719px;top:423px" width="11" height="11"><circle cx="5.500" cy="5.500" r="4.800" fill="#400808"/><circle cx="5.500" cy="5.500" r="3.800" fill="#5c0c0c"/><circle cx="3.900" cy="3.900" r="1.200" fill="#d09090"/></svg>
<div class="t" style="left:733px;top:421px;">..7</div>
<svg class="a" style="left:719px;top:436px" width="11" height="11"><circle cx="5.500" cy="5.500" r="4.800" fill="#400808"/><circle cx="5.500" cy="5.500" r="3.800" fill="#5c0c0c"/><circle cx="3.900" cy="3.900" r="1.200" fill="#d09090"/></svg>
<div class="t" style="left:733px;top:434px;;transform:scaleX(0.86)">D8</div>
<div class="a" style="left:753px;top:345px;width:30px;height:96px;box-shadow:inset 1px 1px 0 #fff,inset -1px -1px 0 #fff"></div>
<div class="a" style="left:767px;top:350px;width:2px;height:82px;background:#848284;box-shadow:1px 0 0 #fff"></div>
<div class="a" style="left:754px;top:351px;width:3px;height:1px;background:#000"></div>
<div class="a" style="left:778px;top:351px;width:3px;height:1px;background:#000"></div>
<div class="a" style="left:754px;top:361px;width:3px;height:1px;background:#000"></div>
<div class="a" style="left:778px;top:361px;width:3px;height:1px;background:#000"></div>
<div class="a" style="left:754px;top:372px;width:3px;height:1px;background:#000"></div>
<div class="a" style="left:778px;top:372px;width:3px;height:1px;background:#000"></div>
<div class="a" style="left:754px;top:382px;width:3px;height:1px;background:#000"></div>
<div class="a" style="left:778px;top:382px;width:3px;height:1px;background:#000"></div>
<div class="a" style="left:754px;top:392px;width:3px;height:1px;background:#000"></div>
<div class="a" style="left:778px;top:392px;width:3px;height:1px;background:#000"></div>
<div class="a" style="left:754px;top:403px;width:3px;height:1px;background:#000"></div>
<div class="a" style="left:778px;top:403px;width:3px;height:1px;background:#000"></div>
<div class="a" style="left:754px;top:413px;width:3px;height:1px;background:#000"></div>
<div class="a" style="left:778px;top:413px;width:3px;height:1px;background:#000"></div>
<div class="a" style="left:754px;top:423px;width:3px;height:1px;background:#000"></div>
<div class="a" style="left:778px;top:423px;width:3px;height:1px;background:#000"></div>
<div class="a" style="left:754px;top:433px;width:3px;height:1px;background:#000"></div>
<div class="a" style="left:778px;top:433px;width:3px;height:1px;background:#000"></div>
<div class="a" style="left:758px;top:430px;width:20px;height:9px;background:#a0a040;border:1px solid #000;box-shadow:inset 1px 1px 0 #e0e0a0"></div>
<div class="a" style="left:761px;top:434px;width:14px;height:1px;background:#404010"></div>
<div class="t" style="left:761px;top:445px;;transform:scaleX(0.86)">S1</div>
<div class="a" style="left:786px;top:345px;width:30px;height:96px;box-shadow:inset 1px 1px 0 #fff,inset -1px -1px 0 #fff"></div>
<div class="a" style="left:800px;top:350px;width:2px;height:82px;background:#848284;box-shadow:1px 0 0 #fff"></div>
<div class="a" style="left:787px;top:351px;width:3px;height:1px;background:#000"></div>
<div class="a" style="left:811px;top:351px;width:3px;height:1px;background:#000"></div>
<div class="a" style="left:787px;top:361px;width:3px;height:1px;background:#000"></div>
<div class="a" style="left:811px;top:361px;width:3px;height:1px;background:#000"></div>
<div class="a" style="left:787px;top:372px;width:3px;height:1px;background:#000"></div>
<div class="a" style="left:811px;top:372px;width:3px;height:1px;background:#000"></div>
<div class="a" style="left:787px;top:382px;width:3px;height:1px;background:#000"></div>
<div class="a" style="left:811px;top:382px;width:3px;height:1px;background:#000"></div>
<div class="a" style="left:787px;top:392px;width:3px;height:1px;background:#000"></div>
<div class="a" style="left:811px;top:392px;width:3px;height:1px;background:#000"></div>
<div class="a" style="left:787px;top:403px;width:3px;height:1px;background:#000"></div>
<div class="a" style="left:811px;top:403px;width:3px;height:1px;background:#000"></div>
<div class="a" style="left:787px;top:413px;width:3px;height:1px;background:#000"></div>
<div class="a" style="left:811px;top:413px;width:3px;height:1px;background:#000"></div>
<div class="a" style="left:787px;top:423px;width:3px;height:1px;background:#000"></div>
<div class="a" style="left:811px;top:423px;width:3px;height:1px;background:#000"></div>
<div class="a" style="left:787px;top:433px;width:3px;height:1px;background:#000"></div>
<div class="a" style="left:811px;top:433px;width:3px;height:1px;background:#000"></div>
<div class="a" style="left:791px;top:430px;width:20px;height:9px;background:#a0a040;border:1px solid #000;box-shadow:inset 1px 1px 0 #e0e0a0"></div>
<div class="a" style="left:794px;top:434px;width:14px;height:1px;background:#404010"></div>
<div class="t" style="left:794px;top:445px;;transform:scaleX(0.86)">S2</div>
<div class="a" style="left:819px;top:345px;width:30px;height:96px;box-shadow:inset 1px 1px 0 #fff,inset -1px -1px 0 #fff"></div>
<div class="a" style="left:833px;top:350px;width:2px;height:82px;background:#848284;box-shadow:1px 0 0 #fff"></div>
<div class="a" style="left:820px;top:351px;width:3px;height:1px;background:#000"></div>
<div class="a" style="left:844px;top:351px;width:3px;height:1px;background:#000"></div>
<div class="a" style="left:820px;top:361px;width:3px;height:1px;background:#000"></div>
<div class="a" style="left:844px;top:361px;width:3px;height:1px;background:#000"></div>
<div class="a" style="left:820px;top:372px;width:3px;height:1px;background:#000"></div>
<div class="a" style="left:844px;top:372px;width:3px;height:1px;background:#000"></div>
<div class="a" style="left:820px;top:382px;width:3px;height:1px;background:#000"></div>
<div class="a" style="left:844px;top:382px;width:3px;height:1px;background:#000"></div>
<div class="a" style="left:820px;top:392px;width:3px;height:1px;background:#000"></div>
<div class="a" style="left:844px;top:392px;width:3px;height:1px;background:#000"></div>
<div class="a" style="left:820px;top:403px;width:3px;height:1px;background:#000"></div>
<div class="a" style="left:844px;top:403px;width:3px;height:1px;background:#000"></div>
<div class="a" style="left:820px;top:413px;width:3px;height:1px;background:#000"></div>
<div class="a" style="left:844px;top:413px;width:3px;height:1px;background:#000"></div>
<div class="a" style="left:820px;top:423px;width:3px;height:1px;background:#000"></div>
<div class="a" style="left:844px;top:423px;width:3px;height:1px;background:#000"></div>
<div class="a" style="left:820px;top:433px;width:3px;height:1px;background:#000"></div>
<div class="a" style="left:844px;top:433px;width:3px;height:1px;background:#000"></div>
<div class="a" style="left:824px;top:430px;width:20px;height:9px;background:#a0a040;border:1px solid #000;box-shadow:inset 1px 1px 0 #e0e0a0"></div>
<div class="a" style="left:827px;top:434px;width:14px;height:1px;background:#404010"></div>
<div class="t" style="left:827px;top:445px;;transform:scaleX(0.86)">S3</div>
<div class="tb" style="left:858px;top:345px;width:23px;height:24px;"></div>
<div class="t tc" style="left:858px;top:350px;width:23px;text-align:center">0</div>
<div class="tb" style="left:881px;top:345px;width:22px;height:24px;"></div>
<div class="t tc" style="left:881px;top:350px;width:22px;text-align:center">1</div>
<div class="a" style="left:903px;top:345px;width:23px;height:24px;background:#d6d3ce;border:1px solid #000;box-shadow:inset 1px 1px 0 #fff,inset -1px -1px 0 #424142,inset -2px -2px 0 #848284"></div>
<div class="t tc" style="left:903px;top:350px;width:23px;text-align:center">2</div>
<div class="tb" style="left:926px;top:345px;width:23px;height:24px;"></div>
<div class="t tc" style="left:926px;top:350px;width:23px;text-align:center">3</div>
<div class="tb" style="left:858px;top:369px;width:23px;height:24px;"></div>
<div class="t tc" style="left:858px;top:374px;width:23px;text-align:center">4</div>
<div class="tb" style="left:881px;top:369px;width:22px;height:24px;"></div>
<div class="t tc" style="left:881px;top:374px;width:22px;text-align:center">5</div>
<div class="tb" style="left:903px;top:369px;width:23px;height:24px;"></div>
<div class="t tc" style="left:903px;top:374px;width:23px;text-align:center">6</div>
<div class="tb" style="left:926px;top:369px;width:23px;height:24px;"></div>
<div class="t tc" style="left:926px;top:374px;width:23px;text-align:center">7</div>
<div class="tb" style="left:858px;top:393px;width:23px;height:24px;"></div>
<div class="t tc" style="left:858px;top:398px;width:23px;text-align:center">8</div>
<div class="tb" style="left:881px;top:393px;width:22px;height:24px;"></div>
<div class="t tc" style="left:881px;top:398px;width:22px;text-align:center">9</div>
<div class="tb" style="left:903px;top:393px;width:23px;height:24px;"></div>
<div class="t tc" style="left:903px;top:398px;width:23px;text-align:center">A</div>
<div class="tb" style="left:926px;top:393px;width:23px;height:24px;"></div>
<div class="t tc" style="left:926px;top:398px;width:23px;text-align:center">B</div>
<div class="tb" style="left:858px;top:417px;width:23px;height:24px;"></div>
<div class="t tc" style="left:858px;top:422px;width:23px;text-align:center">C</div>
<div class="tb" style="left:881px;top:417px;width:22px;height:24px;"></div>
<div class="t tc" style="left:881px;top:422px;width:22px;text-align:center">D</div>
<div class="tb" style="left:903px;top:417px;width:23px;height:24px;"></div>
<div class="t tc" style="left:903px;top:422px;width:23px;text-align:center">E</div>
<div class="tb" style="left:926px;top:417px;width:23px;height:24px;"></div>
<div class="t tc" style="left:926px;top:422px;width:23px;text-align:center">F</div>
<div class="t" style="left:867px;top:445px;">Kx instances</div>
<div class="grp" style="left:600px;top:469px;width:350px;height:127px;"></div>
<div class="t" style="left:700px;top:463px;background:#d6d3ce">&nbsp;7 bits, no parity&nbsp;</div>
<div class="btn" style="left:680px;top:482px;width:42px;height:23px;"></div>
<div class="t" style="left:699px;top:487px;">ear</div>
<div class="btn" style="left:726px;top:482px;width:84px;height:23px;"></div>
<div class="t tc" style="left:726px;top:487px;width:84px;text-align:center">Set parameters</div>
<div class="btn" style="left:813px;top:482px;width:36px;height:23px;"></div>
<div class="t tc" style="left:813px;top:487px;width:36px;text-align:center">Clear</div>
<div class="sunk" style="left:855px;top:486px;width:13px;height:13px;background:#fff"></div>
<div class="t" style="left:874px;top:481px;">RX to</div>
<div class="t" style="left:874px;top:493px;">file</div>
<div class="t" style="left:924px;top:486px;">RX</div>
<div class="sunk" style="left:600px;top:508px;width:164px;height:78px;background:#fff"></div>
<div class="trk" style="left:746px;top:510px;width:16px;height:58px;"></div>
<div class="sb" style="left:746px;top:510px;width:16px;height:16px;"></div>
<svg class="a" style="left:746px;top:510px" width="16" height="16"><polygon points="5.0,11.0 12.0,11.0 8.5,7.0" fill="#fff"/><polygon points="4.0,10.0 11.0,10.0 7.5,6.0" fill="#848284"/></svg>
<div class="sb" style="left:746px;top:552px;width:16px;height:16px;"></div>
<svg class="a" style="left:746px;top:552px" width="16" height="16"><polygon points="5.0,7.0 12.0,7.0 8.5,11.0" fill="#fff"/><polygon points="4.0,6.0 11.0,6.0 7.5,10.0" fill="#848284"/></svg>
<div class="trk" style="left:602px;top:568px;width:144px;height:16px;"></div>
<div class="sb" style="left:730px;top:568px;width:16px;height:16px;"></div>
<svg class="a" style="left:730px;top:568px" width="16" height="16"><polygon points="7.0,5.0 7.0,12.0 11.0,8.5" fill="#fff"/><polygon points="6.0,4.0 6.0,11.0 10.0,7.5" fill="#848284"/></svg>
<div class="a" style="left:746px;top:568px;width:16px;height:16px;background:#d6d3ce"></div>
<div class="sunk" style="left:771px;top:508px;width:173px;height:78px;background:#fff"></div>
<div class="t" style="left:775px;top:511px;">&lt;NUL&gt;11</div>
<div class="trk" style="left:926px;top:510px;width:16px;height:58px;"></div>
<div class="sb" style="left:926px;top:510px;width:16px;height:16px;"></div>
<svg class="a" style="left:926px;top:510px" width="16" height="16"><polygon points="5.0,11.0 12.0,11.0 8.5,7.0" fill="#fff"/><polygon points="4.0,10.0 11.0,10.0 7.5,6.0" fill="#848284"/></svg>
<div class="sb" style="left:926px;top:552px;width:16px;height:16px;"></div>
<svg class="a" style="left:926px;top:552px" width="16" height="16"><polygon points="5.0,7.0 12.0,7.0 8.5,11.0" fill="#fff"/><polygon points="4.0,6.0 11.0,6.0 7.5,10.0" fill="#848284"/></svg>
<div class="trk" style="left:773px;top:568px;width:153px;height:16px;"></div>
<div class="sb" style="left:773px;top:568px;width:16px;height:16px;"></div>
<svg class="a" style="left:773px;top:568px" width="16" height="16"><polygon points="11.0,5.0 11.0,12.0 7.0,8.5" fill="#fff"/><polygon points="10.0,4.0 10.0,11.0 6.0,7.5" fill="#848284"/></svg>
<div class="sb" style="left:910px;top:568px;width:16px;height:16px;"></div>
<svg class="a" style="left:910px;top:568px" width="16" height="16"><polygon points="7.0,5.0 7.0,12.0 11.0,8.5" fill="#fff"/><polygon points="6.0,4.0 6.0,11.0 10.0,7.5" fill="#848284"/></svg>
<div class="a" style="left:926px;top:568px;width:16px;height:16px;background:#d6d3ce"></div>
<div class="win" style="left:9px;top:593px;width:60px;height:102px;"></div>
<div class="tina" style="left:13px;top:597px;width:50px;height:18px;"></div>
<div class="sunk" style="left:11px;top:615px;width:40px;height:77px;background:#fff"></div>
<div class="win" style="left:3px;top:693px;width:160px;height:24px;"></div>
<div class="tina" style="left:6px;top:696px;width:154px;height:18px;"></div>
<div class="tb" style="left:108px;top:698px;width:16px;height:14px;"></div>
<svg class="a" style="left:108px;top:698px" width="16" height="14" shape-rendering="crispEdges"><rect x="4" y="9" width="6" height="2" fill="#000"/></svg>
<div class="tb" style="left:124px;top:698px;width:16px;height:14px;"></div>
<svg class="a" style="left:124px;top:698px" width="16" height="14" shape-rendering="crispEdges"><rect x="3.5" y="2.5" width="8" height="8" fill="none" stroke="#000"/><rect x="3" y="2" width="9" height="2" fill="#000"/></svg>
<div class="tb" style="left:142px;top:698px;width:16px;height:14px;"></div>
<svg class="a" style="left:142px;top:698px" width="16" height="14" shape-rendering="crispEdges"><path d="M4 3 L11 10 M5 3 L12 10 M11 3 L4 10 M12 3 L5 10" stroke="#000" stroke-width="1" shape-rendering="auto"/></svg>
<div class="win" style="left:163px;top:693px;width:160px;height:24px;"></div>
<div class="tina" style="left:166px;top:696px;width:154px;height:18px;"></div>
<div class="tb" style="left:268px;top:698px;width:16px;height:14px;"></div>
<svg class="a" style="left:268px;top:698px" width="16" height="14" shape-rendering="crispEdges"><rect x="4" y="9" width="6" height="2" fill="#000"/></svg>
<div class="tb" style="left:284px;top:698px;width:16px;height:14px;"></div>
<svg class="a" style="left:284px;top:698px" width="16" height="14" shape-rendering="crispEdges"><rect x="3.5" y="2.5" width="8" height="8" fill="none" stroke="#000"/><rect x="3" y="2" width="9" height="2" fill="#000"/></svg>
<div class="tb" style="left:302px;top:698px;width:16px;height:14px;"></div>
<svg class="a" style="left:302px;top:698px" width="16" height="14" shape-rendering="crispEdges"><path d="M4 3 L11 10 M5 3 L12 10 M11 3 L4 10 M12 3 L5 10" stroke="#000" stroke-width="1" shape-rendering="auto"/></svg>
<div class="win" style="left:323px;top:693px;width:160px;height:24px;"></div>
<div class="tina" style="left:326px;top:696px;width:154px;height:18px;"></div>
<div class="tb" style="left:428px;top:698px;width:16px;height:14px;"></div>
<svg class="a" style="left:428px;top:698px" width="16" height="14" shape-rendering="crispEdges"><rect x="4" y="9" width="6" height="2" fill="#000"/></svg>
<div class="tb" style="left:444px;top:698px;width:16px;height:14px;"></div>
<svg class="a" style="left:444px;top:698px" width="16" height="14" shape-rendering="crispEdges"><rect x="3.5" y="2.5" width="8" height="8" fill="none" stroke="#000"/><rect x="3" y="2" width="9" height="2" fill="#000"/></svg>
<div class="tb" style="left:462px;top:698px;width:16px;height:14px;"></div>
<svg class="a" style="left:462px;top:698px" width="16" height="14" shape-rendering="crispEdges"><path d="M4 3 L11 10 M5 3 L12 10 M11 3 L4 10 M12 3 L5 10" stroke="#000" stroke-width="1" shape-rendering="auto"/></svg>
<svg class="a" style="left:9px;top:697px" width="14" height="16" shape-rendering="crispEdges"><rect x="1" y="1" width="10" height="13" fill="#10e8e8"/><path d="M2 3.500h8M2 6.500h8M2 9.500h8M2 12.500h8" stroke="#009090"/><path d="M4.500 1v13M7.500 1v13" stroke="#30b8b8"/></svg>
<div class="a" style="left:172px;top:707px;width:6px;height:6px;background:#000;border-radius:3px"></div>
<div class="a" style="left:334px;top:708px;width:5px;height:5px;border:1px solid #000;border-radius:3px"></div>
<div class="a" style="left:340px;top:708px;width:5px;height:5px;border:1px solid #000;border-radius:3px"></div>
<div class="win" style="left:17px;top:210px;width:685px;height:500px;"></div>
<div class="tact" style="left:21px;top:214px;width:677px;height:18px;"></div>
<svg class="a" style="left:23px;top:215px" width="16" height="16" shape-rendering="crispEdges"><rect x="0.500" y="0.500" width="13" height="15" fill="#fff" stroke="#000"/><rect x="2" y="2" width="10" height="7" fill="#003000"/><path d="M2 5 H5 V7 H8 V4 H12" fill="none" stroke="#40e040"/><rect x="2" y="11" width="2" height="2" fill="#000"/><rect x="6" y="11" width="2" height="2" fill="#000"/><rect x="10" y="11" width="2" height="2" fill="#000"/><rect x="14" y="2" width="2" height="13" fill="#909050"/></svg>
<div class="cap" style="left:43px;top:217px;letter-spacing:0.3px">Scope</div>
<div class="tb" style="left:646px;top:216px;width:16px;height:14px;"></div>
<svg class="a" style="left:646px;top:216px" width="16" height="14" shape-rendering="crispEdges"><rect x="4" y="9" width="6" height="2" fill="#000"/></svg>
<div class="tb" style="left:662px;top:216px;width:16px;height:14px;"></div>
<svg class="a" style="left:662px;top:216px" width="16" height="14" shape-rendering="crispEdges"><rect x="3.5" y="2.5" width="8" height="8" fill="none" stroke="#000"/><rect x="3" y="2" width="9" height="2" fill="#000"/></svg>
<div class="tb" style="left:680px;top:216px;width:16px;height:14px;"></div>
<svg class="a" style="left:680px;top:216px" width="16" height="14" shape-rendering="crispEdges"><path d="M4 3 L11 10 M5 3 L12 10 M11 3 L4 10 M12 3 L5 10" stroke="#000" stroke-width="1" shape-rendering="auto"/></svg>
<div class="btn" style="left:29px;top:241px;width:59px;height:23px;"></div>
<div class="t tc" style="left:29px;top:246px;width:59px;text-align:center">Full view</div>
<div class="btn" style="left:29px;top:266px;width:59px;height:23px;"></div>
<div class="t tc" style="left:29px;top:271px;width:59px;text-align:center;transform:scaleX(0.993)">Undo view</div>
<div class="btn" style="left:29px;top:290px;width:59px;height:23px;"></div>
<div class="t tc" style="left:29px;top:295px;width:59px;text-align:center">Zoom in</div>
<div class="btn" style="left:29px;top:314px;width:59px;height:23px;"></div>
<div class="t tc" style="left:29px;top:319px;width:59px;text-align:center;transform:scaleX(0.997)">Zoom out</div>
<div class="btn" style="left:29px;top:339px;width:59px;height:23px;"></div>
<div class="t tc" style="left:29px;top:344px;width:59px;text-align:center">Export</div>
<div class="btn" style="left:29px;top:363px;width:59px;height:23px;"></div>
<div class="t tc" style="left:29px;top:368px;width:59px;text-align:center">Analyze</div>
<div class="t" style="left:29px;top:397px;;transform:scaleX(0.996)">Horiz./div</div>
<div class="sunk" style="left:29px;top:410px;width:59px;height:19px;background:#fff"></div>
<div class="t" style="left:33px;top:414px;;transform:scaleX(0.968)">100 us</div>
<div class="tb" style="left:70px;top:412px;width:16px;height:15px;"></div>
<svg class="a" style="left:70px;top:412px" width="16" height="15"><polygon points="4.0,5.5 11.0,5.5 7.5,9.5" fill="#000"/></svg>
<div class="t" style="left:29px;top:436px;;transform:scaleX(1.018)">Vertical/div</div>
<div class="sunk" style="left:29px;top:449px;width:59px;height:19px;background:#fff"></div>
<div class="t" style="left:33px;top:453px;">2 V</div>
<div class="tb" style="left:70px;top:451px;width:16px;height:15px;"></div>
<svg class="a" style="left:70px;top:451px" width="16" height="15"><polygon points="4.0,5.5 11.0,5.5 7.5,9.5" fill="#000"/></svg>
<div class="grp" style="left:27px;top:481px;width:60px;height:67px;"></div>
<div class="t" style="left:37px;top:475px;background:#d6d3ce">&nbsp;Cursor&nbsp;</div>
<svg class="a" style="left:37px;top:490px" width="12" height="12"><circle cx="6" cy="6" r="5.500" fill="#fff"/><path d="M1.800 10.200 A6 6 0 0 1 10.200 1.800" fill="none" stroke="#848284" stroke-width="1.200"/><path d="M2.600 9.400 A4.800 4.800 0 0 1 9.400 2.600" fill="none" stroke="#424142" stroke-width="1"/><path d="M10.200 1.800 A6 6 0 0 1 1.800 10.200" fill="none" stroke="#fff" stroke-width="1.200"/><path d="M9.400 2.600 A4.800 4.800 0 0 1 2.600 9.400" fill="none" stroke="#d6d3ce" stroke-width="1"/></svg>
<div class="t" style="left:54px;top:490px;">1</div>
<svg class="a" style="left:37px;top:509px" width="12" height="12"><circle cx="6" cy="6" r="5.500" fill="#fff"/><path d="M1.800 10.200 A6 6 0 0 1 10.200 1.800" fill="none" stroke="#848284" stroke-width="1.200"/><path d="M2.600 9.400 A4.800 4.800 0 0 1 9.400 2.600" fill="none" stroke="#424142" stroke-width="1"/><path d="M10.200 1.800 A6 6 0 0 1 1.800 10.200" fill="none" stroke="#fff" stroke-width="1.200"/><path d="M9.400 2.600 A4.800 4.800 0 0 1 2.600 9.400" fill="none" stroke="#d6d3ce" stroke-width="1"/></svg>
<div class="t" style="left:54px;top:509px;">2</div>
<svg class="a" style="left:37px;top:529px" width="12" height="12"><circle cx="6" cy="6" r="5.500" fill="#fff"/><path d="M1.800 10.200 A6 6 0 0 1 10.200 1.800" fill="none" stroke="#848284" stroke-width="1.200"/><path d="M2.600 9.400 A4.800 4.800 0 0 1 9.400 2.600" fill="none" stroke="#424142" stroke-width="1"/><path d="M10.200 1.800 A6 6 0 0 1 1.800 10.200" fill="none" stroke="#fff" stroke-width="1.200"/><path d="M9.400 2.600 A4.800 4.800 0 0 1 2.600 9.400" fill="none" stroke="#d6d3ce" stroke-width="1"/><circle cx="6" cy="6" r="1.800" fill="#000"/></svg>
<div class="t" style="left:54px;top:529px;">None</div>
<div class="a" style="left:63px;top:500px;width:16px;height:1px;background:#000"></div>
<div class="a" style="left:63px;top:518px;width:6px;height:1px;background:#000"></div>
<div class="a" style="left:73px;top:518px;width:6px;height:1px;background:#000"></div>
<div class="t" style="left:29px;top:552px;">Cursors</div>
<div class="t" style="left:29px;top:565px;">delta time</div>
<div class="sunk" style="left:29px;top:578px;width:59px;height:17px;background:#000"></div>
<div class="a" style="left:91px;top:241px;width:587px;height:445px;background:#e6e4dc;box-shadow:inset 1px 1px 0 #848284,inset -1px -1px 0 #fff"></div>
<svg class="a" style="left:95px;top:245px" width="579" height="437" viewBox="95 245 579 437" shape-rendering="crispEdges"><defs><pattern id="dots" x="107" y="257" width="25" height="25" patternUnits="userSpaceOnUse"><rect x="0" y="0" width="1" height="1" fill="#f0f0b0"/></pattern></defs><rect x="95" y="245" width="579" height="437" fill="#000"/><rect x="95" y="245" width="579" height="437" fill="url(#dots)"/><rect x="95" y="247" width="579" height="4" fill="#ff00ff"/><rect x="95" y="307" width="579" height="1" fill="#e020e0"/><rect x="400" y="251" width="2" height="8" fill="#e020e0"/><rect x="400" y="287" width="2" height="21" fill="#ff00ff"/><path d="M95.500 320.500 H153.500 V381.500 H179.500 V320.500 H205.500 V381.500 H283.500 V320.500 H335.500 V381.500 H361.500 V320.500 H674" fill="none" stroke="#30e030" stroke-width="1"/><path d="M95.500 395.500 H400.500 V457.500 H426.500 V395.500 H452.500 V457.500 H530.500 V395.500 H582.500 V457.500 H608.500 V395.500 H674" fill="none" stroke="#30e030" stroke-width="1"/><path d="M97.500 321 V382.500 H133" fill="none" stroke="#d01818"/><path d="M97.500 396 V457.500 H133" fill="none" stroke="#d01818"/></svg>
<div class="t" style="left:101px;top:294px;color:#f0f040;-webkit-text-stroke:0;transform:scaleX(0.998)">Trace / Prio</div>
<div class="t" style="left:101px;top:370px;color:#f0f040;-webkit-text-stroke:0">PD0</div>
<div class="t" style="left:101px;top:445px;color:#f0f040;-webkit-text-stroke:0">PD1</div>
<div class="trk" style="left:682px;top:241px;width:16px;height:445px;"></div>
<div class="sb" style="left:682px;top:241px;width:16px;height:16px;"></div>
<svg class="a" style="left:682px;top:241px" width="16" height="16"><polygon points="4.0,10.0 11.0,10.0 7.5,6.0" fill="#000"/></svg>
<div class="sb" style="left:682px;top:257px;width:16px;height:351px;"></div>
<div class="sb" style="left:682px;top:670px;width:16px;height:16px;"></div>
<svg class="a" style="left:682px;top:670px" width="16" height="16"><polygon points="4.0,6.0 11.0,6.0 7.5,10.0" fill="#000"/></svg>
<div class="trk" style="left:92px;top:690px;width:586px;height:16px;"></div>
<div class="sb" style="left:92px;top:690px;width:16px;height:16px;"></div>
<svg class="a" style="left:92px;top:690px" width="16" height="16"><polygon points="10.0,4.0 10.0,11.0 6.0,7.5" fill="#000"/></svg>
<div class="sb" style="left:644px;top:690px;width:8px;height:16px;"></div>
<div class="sb" style="left:662px;top:690px;width:16px;height:16px;"></div>
<svg class="a" style="left:662px;top:690px" width="16" height="16"><polygon points="6.0,4.0 6.0,11.0 10.0,7.5" fill="#000"/></svg>
<div class="trk" style="left:1006px;top:75px;width:16px;height:642px;"></div>
<div class="sb" style="left:1006px;top:75px;width:16px;height:16px;"></div>
<svg class="a" style="left:1006px;top:75px" width="16" height="16"><polygon points="4.0,10.0 11.0,10.0 7.5,6.0" fill="#000"/></svg>
<div class="sb" style="left:1006px;top:106px;width:16px;height:572px;"></div>
<div class="sb" style="left:1006px;top:701px;width:16px;height:16px;"></div>
<svg class="a" style="left:1006px;top:701px" width="16" height="16"><polygon points="4.0,6.0 11.0,6.0 7.5,10.0" fill="#000"/></svg>
<div class="a" style="left:0px;top:719px;width:1024px;height:49px;background:#d6d3ce"></div>
<div class="thin" style="left:7px;top:720px;width:346px;height:16px;"></div>
<div class="t" style="left:14px;top:722px;;transform:scaleX(1.008)">d:\Разработки\getchip\110-Модуль uart_to_pin - управление нагру:</div>
<div class="thin" style="left:357px;top:720px;width:108px;height:16px;"></div>
<div class="t" style="left:363px;top:722px;;transform:scaleX(0.995)">AT90S2313</div>
<div class="thin" style="left:467px;top:720px;width:108px;height:16px;"></div>
<div class="t" style="left:473px;top:722px;">PRJ file OK</div>
<div class="thin" style="left:578px;top:720px;width:108px;height:16px;"></div>
<div class="t" style="left:583px;top:722px;">Code OK</div>
<div class="thin" style="left:688px;top:720px;width:108px;height:16px;"></div>
<div class="t" style="left:693px;top:722px;">Break</div>
<div class="thin" style="left:798px;top:720px;width:108px;height:16px;"></div>
<div class="t" style="left:804px;top:722px;">Time:&nbsp; 2508.8 ms</div>
<div class="thin" style="left:908px;top:720px;width:109px;height:16px;"></div>
<div class="a" style="left:0px;top:739px;width:1024px;height:1px;background:#fff"></div>
<div class="btn" style="left:2px;top:742px;width:51px;height:22px;"></div>
<svg class="a" style="left:5px;top:745px" width="15" height="15"><path d="M1 3 Q4 1 6.500 3 L6 7.500 Q3.500 6 0.500 7.500 Z" fill="#e05020"/><path d="M8 3.500 Q11 5 14 3 L13.500 7.500 Q10.500 9.500 7.500 8 Z" fill="#50b040"/><path d="M0.500 8.500 Q3.500 7 6 8.500 L5.500 13 Q3 11.500 0 13 Z" fill="#3070e0"/><path d="M7.500 9 Q10.500 11 13.500 9 L13 13.500 Q10 15 7 13.500 Z" fill="#f0c020"/></svg>
<div class="t" style="left:22px;top:747px;font-weight:bold;font-size:12px">Пуск</div>
<svg class="a" style="left:61px;top:745px" width="16" height="16"><rect x="0.500" y="1.500" width="15" height="12" fill="#3068c0" stroke="#8098b0"/><path d="M1 9 L15 5 V13 H1 Z" fill="#5090d8"/><rect x="1" y="11" width="14" height="2.500" fill="#203860"/></svg>
<svg class="a" style="left:84px;top:745px" width="15" height="16" shape-rendering="crispEdges"><rect x="0" y="0" width="15" height="16" fill="#1020b0"/><rect x="3" y="0" width="8" height="4" fill="#fff"/><rect x="8" y="1" width="2" height="3" fill="#1020b0"/><rect x="1" y="7" width="13" height="7" fill="#fff"/><rect x="1" y="8" width="13" height="2" fill="#e02020"/><rect x="1" y="12" width="13" height="2" fill="#e02020"/></svg>
<svg class="a" style="left:107px;top:745px" width="16" height="16"><circle cx="8" cy="8" r="7.500" fill="#90c8f0"/><circle cx="8" cy="8" r="6" fill="#b8e0ff"/><path d="M3 11 L6 6 L6.500 10 L9.500 5.500 L10 10 L13 6" fill="none" stroke="#1030a0" stroke-width="2"/></svg>
<div class="t" style="left:135px;top:742px;font-weight:bold;font-size:12px">»</div>
<div class="btn" style="left:147px;top:742px;width:159px;height:22px;"></div>
<svg class="a" style="left:152px;top:745px" width="16" height="16"><circle cx="8" cy="8" r="7.500" fill="#a8b8c8"/><circle cx="8" cy="8" r="6" fill="#3080c0"/><path d="M4 8 A4 4 0 0 1 11 5" fill="none" stroke="#60e080" stroke-width="2"/><path d="M12 8 A4 4 0 0 1 5 11" fill="none" stroke="#c0e8ff" stroke-width="2"/></svg>
<div class="t" style="left:171px;top:747px;;transform:scaleX(1.0)">Total Commander 6.55 - ...</div>
<div class="btn" style="left:311px;top:742px;width:158px;height:22px;"></div>
<svg class="a" style="left:314px;top:745px" width="16" height="16"><circle cx="8" cy="8" r="7.500" fill="#90c8f0"/><circle cx="8" cy="8" r="6" fill="#b8e0ff"/><path d="M3 11 L6 6 L6.500 10 L9.500 5.500 L10 10 L13 6" fill="none" stroke="#1030a0" stroke-width="2"/></svg>
<div class="t" style="left:333px;top:747px;;transform:scaleX(1.05)">MyIE - [• Ответить]</div>
<div class="a" style="left:474px;top:742px;width:158px;height:22px;background:repeating-conic-gradient(#fff 0% 25%,#d6d3ce 0% 50%) 0 0/2px 2px;box-shadow:inset 1px 1px 0 #424142,inset -1px -1px 0 #fff,inset 2px 2px 0 #848284,inset -2px -2px 0 #d6d3ce"></div>
<svg class="a" style="left:478px;top:745px" width="16" height="16"><rect x="1" y="1" width="14.500" height="14" fill="#0818b0"/>
<path d="M2.500 2.200 H14.500 L13 3.800 H4 Z" fill="#f0d040"/>
<path d="M3 2.500 L14 14 M14 2.500 L3 14" stroke="#000" stroke-width="1.700"/>
<rect x="6.500" y="3.500" width="4" height="3.200" fill="#f4f4e0"/><path d="M7 7 L9.500 5" stroke="#e0c030" stroke-width="1"/>
<path d="M9 9 L14 14 H9 Z" fill="#30e0f0"/><rect x="3" y="12" width="6" height="2" fill="#fff"/></svg>
<div class="t" style="left:501px;top:747px;font-weight:bold">VMLAB</div>
<div class="a" style="left:929px;top:746px;width:12px;height:16px;background:#08246b"></div>
<div class="t" style="left:930px;top:747px;color:#fff;font-size:10px;width:11px;overflow:hidden">EN</div>
<div class="thin" style="left:945px;top:742px;width:76px;height:22px;"></div>
<div class="t" style="left:950px;top:747px;font-weight:bold;font-size:12px">«</div>
<svg class="a" style="left:962px;top:745px" width="18" height="16"><rect x="6" y="1" width="11" height="9" fill="#707070"/><rect x="1" y="3" width="11" height="9" fill="#909090" stroke="#606060"/><rect x="3" y="5" width="7" height="5" fill="#a8a8a8"/><rect x="4" y="12" width="6" height="2" fill="#606060"/><rect x="2" y="14" width="10" height="1.500" fill="#848284"/></svg>
<div class="t" style="left:986px;top:748px;">14:50</div>
</div></body></html>
